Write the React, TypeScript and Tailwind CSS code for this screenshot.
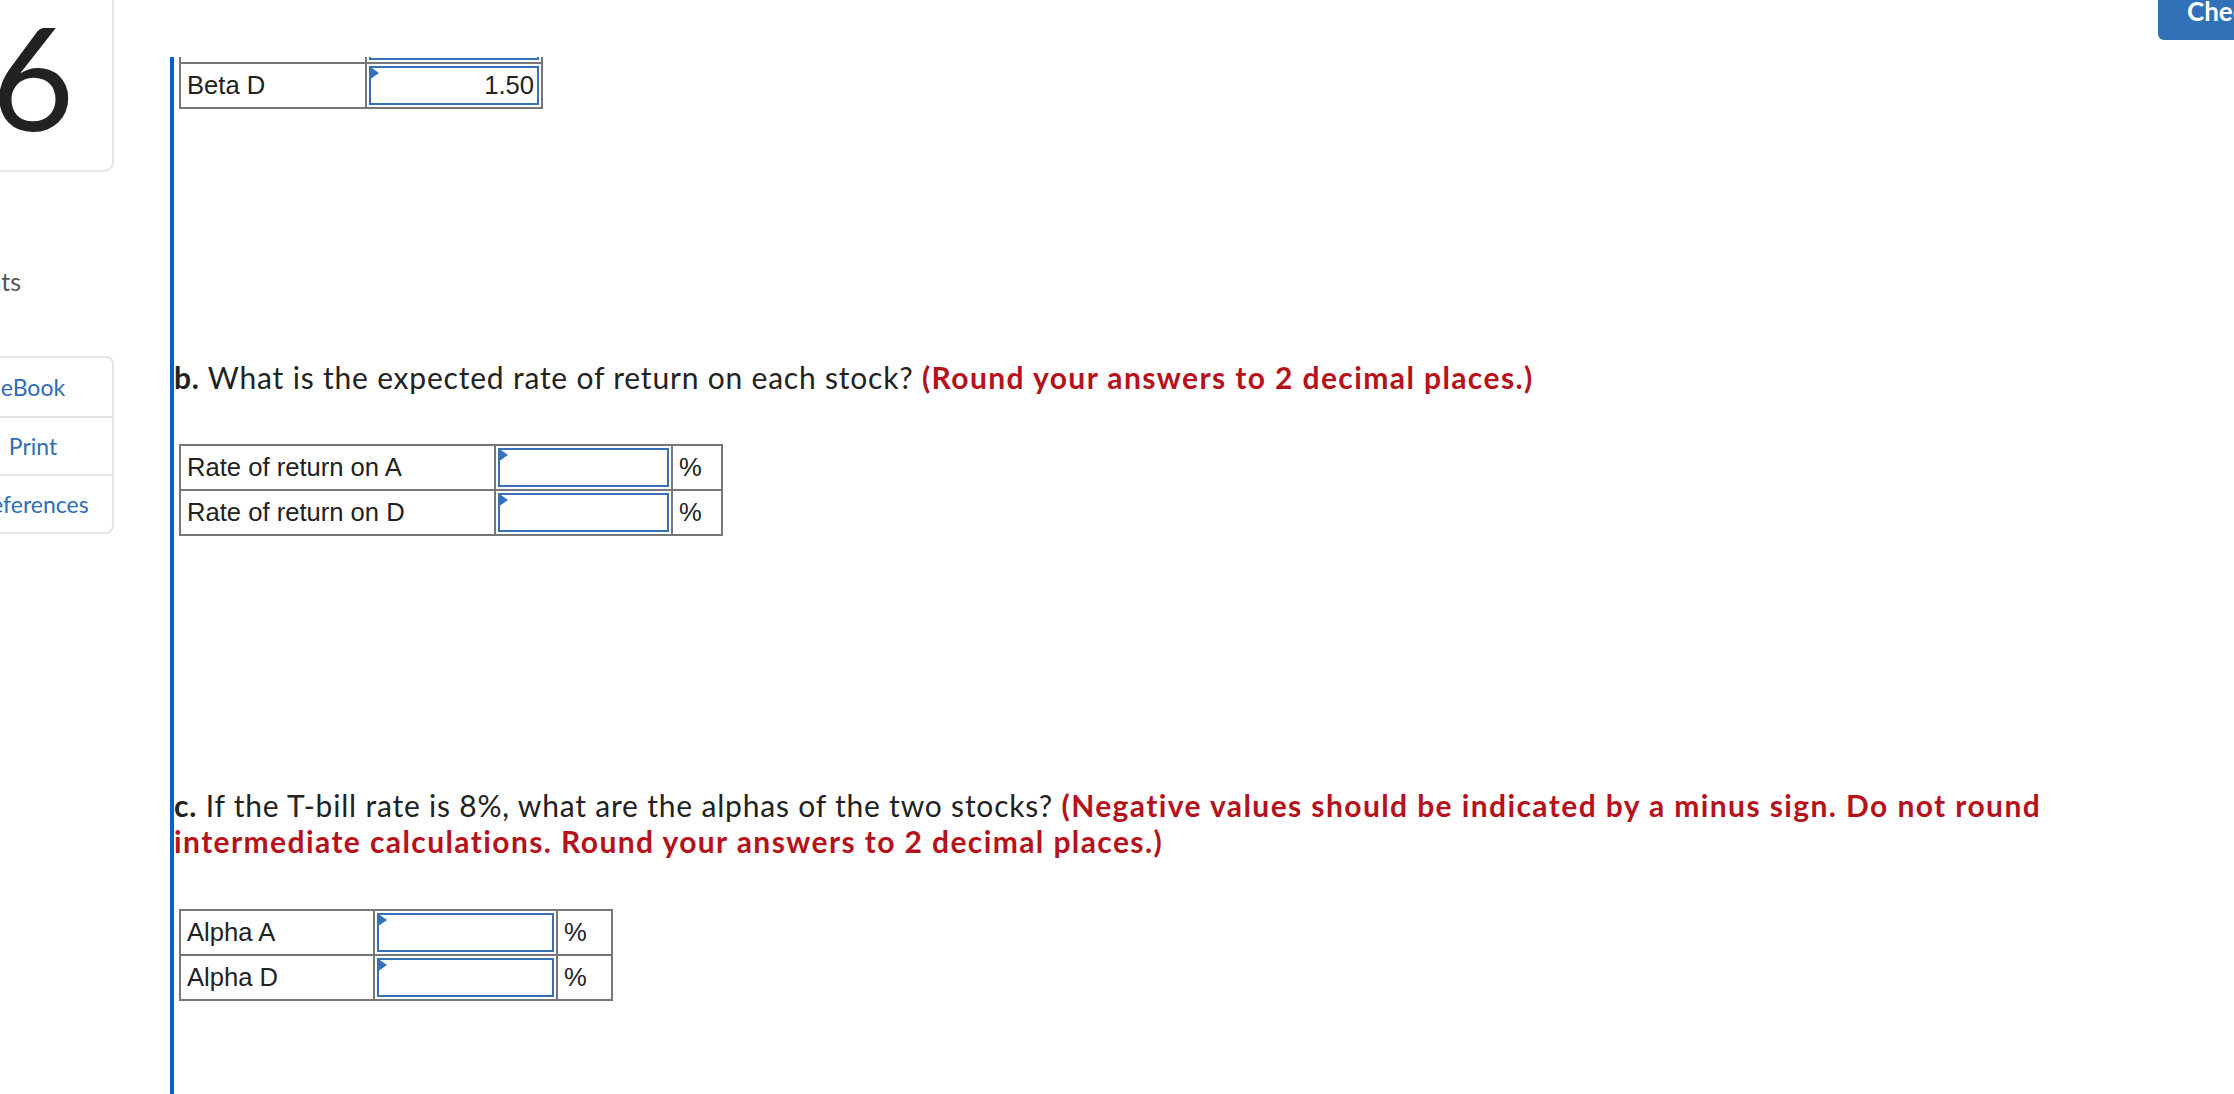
import React from 'react'

const GRAY = 'border-[#777777]'

const Flag = () => (
  <svg
    className="absolute -left-[2px] -top-[2px]"
    width="10"
    height="14"
    viewBox="0 0 10 14"
  >
    <polygon points="0,0 10,7 0,14" fill="#3471b6" />
  </svg>
)

const InputCell = ({ value }: { value?: string }) => (
  <div className={`border-r-2 border-b-2 ${GRAY} h-[45px] p-[2px]`}>
    <div className="relative h-full border-2 border-[#3471b6] bg-white flex items-center justify-end pr-[3px]">
      <Flag />
      {value && <span>{value}</span>}
    </div>
  </div>
)

const LabelCell = ({ text }: { text: string }) => (
  <div className={`border-r-2 border-b-2 ${GRAY} h-[45px] flex items-center pl-[6px]`}>
    {text}
  </div>
)

const UnitCell = () => (
  <div className={`border-r-2 border-b-2 ${GRAY} h-[45px] flex items-center pl-[6px]`}>
    %
  </div>
)

export default function App() {
  return (
    <div className="relative w-[2234px] h-[1094px] overflow-hidden bg-white">
      {/* Check my work button, cut off by the window edge */}
      <div className="absolute top-0 right-0 w-[76px] h-[40px] bg-[#3171b8] rounded-bl-[6px] overflow-hidden pl-[29px]">
        <div className="-mt-[2px] whitespace-nowrap text-white font-bold text-[26px] leading-none font-['Lato',sans-serif]">
          Check my work
        </div>
      </div>

      <div className="flex">
        {/* Left sidebar */}
        <aside className="w-[162px] -ml-[48px] shrink-0 font-['Lato',sans-serif]">
          <div className="h-[172px] border-2 border-t-0 border-[#e6e6e6] rounded-br-[10px] flex justify-center pt-[4px] text-[143px] leading-none text-[#222]">
            6
          </div>
          <div className="mt-[94px] w-[69px] text-right text-[25px] leading-[30px] text-[#555]">
            Points
          </div>
          <div className="mt-[60px] border-2 border-[#e4e4e4] rounded-r-[8px] text-[23px] text-[#2e6db4] text-center">
            <div className="h-[58px] flex items-center justify-center">eBook</div>
            <div className="h-[58px] flex items-center justify-center border-t-2 border-[#e4e4e4]">Print</div>
            <div className="h-[58px] flex items-center justify-center border-t-2 border-[#e4e4e4]">References</div>
          </div>
        </aside>

        {/* Question content */}
        <main className="ml-[56px] mt-[57px] h-[1037px] flex-1 border-l-4 border-[#0a5fd0] overflow-hidden">
          <div
            className={`ml-[5px] -mt-[40px] grid w-fit grid-cols-[186px_176px] border-t-2 border-l-2 ${GRAY} text-[25.6px] text-[#222] font-['Liberation_Sans',Arial,sans-serif]`}
          >
            <LabelCell text="Beta A" />
            <InputCell value="0.70" />
            <LabelCell text="Beta D" />
            <InputCell value="1.50" />
          </div>

          <p className="mt-[250px] w-[1900px] text-[30px] leading-[36px] text-[#222] tracking-[0.8px] font-['Lato',sans-serif]">
            <span className="font-bold">b.</span> What is the expected rate of return on each stock?{' '}
            <span className="font-bold text-[#b5121b] tracking-[1.4px]">(Round your answers to 2 decimal places.)</span>
          </p>

          <div
            className={`ml-[5px] mt-[49px] grid w-fit grid-cols-[315px_177px_50px] border-t-2 border-l-2 ${GRAY} text-[25.6px] text-[#222] font-['Liberation_Sans',Arial,sans-serif]`}
          >
            <LabelCell text="Rate of return on A" />
            <InputCell />
            <UnitCell />
            <LabelCell text="Rate of return on D" />
            <InputCell />
            <UnitCell />
          </div>

          <p className="mt-[251px] w-[1900px] text-[30px] leading-[36px] text-[#222] tracking-[0.8px] font-['Lato',sans-serif]">
            <span className="font-bold">c.</span> If the T-bill rate is 8%, what are the alphas of the two stocks?{' '}
            <span className="font-bold text-[#b5121b] tracking-[1.4px]">
              (Negative values should be indicated by a minus sign. Do not round intermediate calculations. Round your
              answers to 2 decimal places.)
            </span>
          </p>

          <div
            className={`ml-[5px] mt-[50px] grid w-fit grid-cols-[194px_183px_55px] border-t-2 border-l-2 ${GRAY} text-[25.6px] text-[#222] font-['Liberation_Sans',Arial,sans-serif]`}
          >
            <LabelCell text="Alpha A" />
            <InputCell />
            <UnitCell />
            <LabelCell text="Alpha D" />
            <InputCell />
            <UnitCell />
          </div>
        </main>
      </div>
    </div>
  )
}
